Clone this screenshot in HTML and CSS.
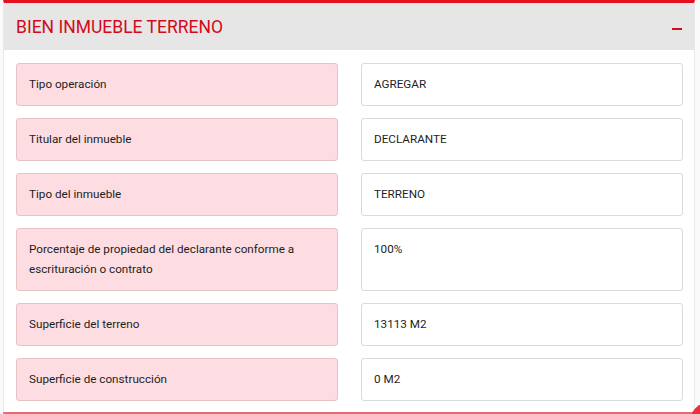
FILE: index.html
```html
<!DOCTYPE html>
<html lang="es">

<head>
    <meta charset="UTF-8">
    <title>Bien inmueble terreno</title>
    <link rel="stylesheet" href="styles.css">
</head>

<body>
    <section class="panel">
        <div class="panelheader">
            <h2 class="paneltitle">BIEN INMUEBLE TERRENO</h2>
            <span class="collapse"></span>
        </div>
        <div class="panelbody">
            <div class="fieldrow">
                <div class="fieldlabel">Tipo operación</div>
                <div class="fieldvalue">AGREGAR</div>
            </div>
            <div class="fieldrow">
                <div class="fieldlabel">Titular del inmueble</div>
                <div class="fieldvalue">DECLARANTE</div>
            </div>
            <div class="fieldrow">
                <div class="fieldlabel">Tipo del inmueble</div>
                <div class="fieldvalue">TERRENO</div>
            </div>
            <div class="fieldrow">
                <div class="fieldlabel">Porcentaje de propiedad del declarante conforme a escrituración o contrato</div>
                <div class="fieldvalue">100%</div>
            </div>
            <div class="fieldrow">
                <div class="fieldlabel">Superficie del terreno</div>
                <div class="fieldvalue">13113 M2</div>
            </div>
            <div class="fieldrow">
                <div class="fieldlabel">Superficie de construcción</div>
                <div class="fieldvalue">0 M2</div>
            </div>
        </div>
    </section>
    <section class="panel nextpanel"></section>
    <span class="fab"></span>
</body>

</html>
```

FILE: styles.css
```css
html,
body {
    height: 414px;
    overflow: hidden;
}

body {
    margin: 0;
    background-color: #fafafa;
    font-family: Roboto, 'Liberation Sans', sans-serif;
    color: #1e1e1e;
}

.panel {
    width: 690px;
    margin: 0 0 0 3px;
    background-color: white;
    border: 1px solid #e8e8e8;
    border-top: 3px solid #e3101f;
    border-bottom: none;
}

.panelheader {
    display: flex;
    align-items: center;
    justify-content: space-between;
    height: 47px;
    padding: 0 12px 0 12px;
    background-color: #e6e6e6;
}

.paneltitle {
    margin: 0;
    padding-top: 1px;
    font-size: 17.5px;
    font-weight: 400;
    color: #d30a1a;
}

.collapse {
    display: block;
    width: 10px;
    height: 2px;
    margin-top: 4px;
    background-color: #d30a1a;
}

.panelbody {
    display: flex;
    flex-direction: column;
    gap: 12px;
    padding: 13px 11px 11px 12px;
}

.fieldrow {
    display: grid;
    grid-template-columns: 322px 322px;
    column-gap: 23px;
}

.fieldlabel,
.fieldvalue {
    font-size: 11.7px;
    line-height: 20px;
    padding: 10px 13px 11px 12px;
    border-radius: 3px;
}

.fieldlabel {
    background-color: #fddde1;
    border: 1px solid #e6c3c7;
}

.fieldvalue {
    background-color: white;
    border: 1px solid #dadada;
}

.nextpanel {
    height: 10px;
    border-top: 3px solid #e86a6f;
}

.fab {
    position: absolute;
    left: 690px;
    top: 402px;
    width: 40px;
    height: 40px;
    border-radius: 50%;
    background-color: #e8323e;
}
```
